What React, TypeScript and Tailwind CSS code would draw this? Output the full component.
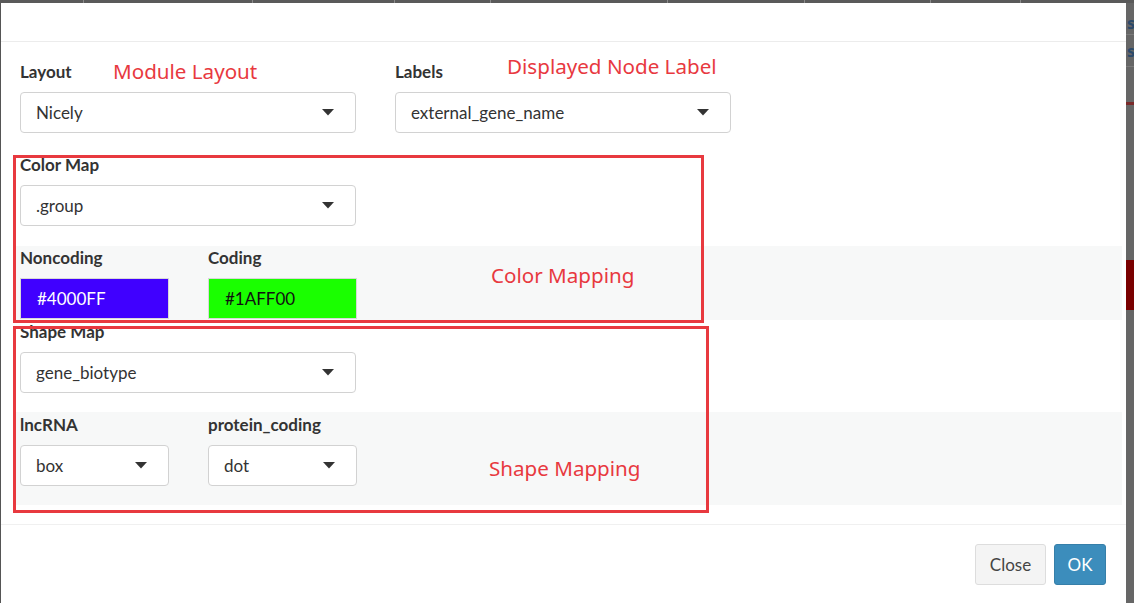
import React from "react";

const ui = { fontFamily: "Lato, 'Open Sans', sans-serif" };
const note = { fontFamily: "'Noto Sans', 'Open Sans', sans-serif" };

function Caret() {
  return (
    <svg width="12" height="7" viewBox="0 0 12 7" className="block">
      <path d="M0 0H12L6 6.5Z" fill="#333" />
    </svg>
  );
}

function Label({ children }: { children: React.ReactNode }) {
  return <div className="h-[20px] text-[17px] leading-[20px] font-bold text-[#333] mb-[10px]">{children}</div>;
}

function Select({ value, small }: { value: string; small?: boolean }) {
  return (
    <div
      className={
        (small ? "w-[149px] " : "w-[336px] ") +
        "h-[41px] flex items-center justify-between rounded-[4px] border border-[#d2d2d2] bg-white pl-[15px] pr-[21px] text-[17px] text-[#333]"
      }
    >
      <span>{value}</span>
      <Caret />
    </div>
  );
}

export default function App() {
  return (
    <div className="relative w-[1134px] h-[603px] overflow-hidden bg-[#666666]" style={ui}>
      {/* top strip of background page */}
      <div className="h-[3px] bg-[#5a5a5a] flex">
        <div className="w-[83px]" /><div className="w-px bg-[#8a8a8a]" />
        <div className="w-[168px]" /><div className="w-px bg-[#8a8a8a]" />
        <div className="w-[141px]" /><div className="w-px bg-[#8a8a8a]" />
        <div className="w-[95px]" /><div className="w-px bg-[#8a8a8a]" />
        <div className="w-[176px]" /><div className="w-px bg-[#8a8a8a]" />
        <div className="w-[136px]" /><div className="w-px bg-[#8a8a8a]" />
        <div className="w-[125px]" /><div className="w-px bg-[#8a8a8a]" />
        <div className="w-[89px]" /><div className="w-px bg-[#8a8a8a]" />
      </div>
      <div className="flex">
        <div className="w-[1px] bg-[#555]" />
        {/* modal */}
        <div className="w-[1125px] h-[600px] bg-white flex flex-col">
          <div className="h-[39px] border-b border-[#ececec] shrink-0" />
          {/* body */}
          <div className="flex flex-col">
            <div className="px-[19px] pt-[20px] grid grid-cols-[336px_336px] gap-x-[39px]">
              <div>
                <Label>Layout</Label>
                <Select value="Nicely" />
              </div>
              <div>
                <Label>Labels</Label>
                <Select value="external_gene_name" />
              </div>
            </div>
            <div className="px-[19px] pt-[22px]">
              <Label>Color Map</Label>
              <Select value=".group" />
            </div>
            <div className="mt-[20px] ml-[14px] mr-[4px] bg-[#f7f8f8] pl-[5px] pt-[2px] pb-[1px] flex gap-[39px]">
              <div>
                <Label>Noncoding</Label>
                <div className="w-[149px] h-[41px] flex items-center pl-[16px] bg-[#4000FF] text-white text-[17px] border border-[#d8d8d8]">#4000FF</div>
              </div>
              <div>
                <Label>Coding</Label>
                <div className="w-[149px] h-[41px] flex items-center pl-[16px] bg-[#1AFF00] text-[#111] text-[17px] border border-[#d8d8d8]">#1AFF00</div>
              </div>
            </div>
            <div className="px-[19px] pt-[2px]">
              <Label>Shape Map</Label>
              <Select value="gene_biotype" />
            </div>
            <div className="mt-[19px] ml-[14px] mr-[4px] bg-[#f7f8f8] pl-[5px] pt-[3px] pb-[19px] flex gap-[39px]">
              <div>
                <Label>lncRNA</Label>
                <Select value="box" small />
              </div>
              <div>
                <Label>protein_coding</Label>
                <Select value="dot" small />
              </div>
            </div>
            <div className="h-[19px]" />
          </div>
          {/* footer */}
          <div className="border-t border-[#f0f0f0] pt-[19px] pr-[20px] flex justify-end gap-[8px]">
            <button className="h-[41px] w-[71px] rounded-[3px] border border-[#dddddd] bg-[#f4f4f4] text-[17px] text-[#444]">Close</button>
            <button className="h-[41px] w-[52px] rounded-[3px] border border-[#367fa9] bg-[#3c8dbc] text-[17px] text-white">OK</button>
          </div>
        </div>
        {/* background page right strip */}
        <div className="flex-1 relative">
          <div className="absolute left-[1px] top-[8px] text-[16px] font-bold text-[#2c4a6b]" style={note}>s</div>
          <div className="absolute left-0 right-0 top-[31px] h-px bg-[#7a7a7a]" />
          <div className="absolute left-[1px] top-[36px] text-[16px] font-bold text-[#2c4a6b]" style={note}>s</div>
          <div className="absolute left-0 right-0 top-[63px] h-px bg-[#7a7a7a]" />
          <div className="absolute left-0 right-0 top-[99px] h-[3px] bg-[#7a2a2a]" />
          <div className="absolute left-0 right-0 top-[257px] h-[50px] bg-[#7a0000]" />
        </div>
      </div>

      {/* annotations */}
      <div className="absolute left-[113px] top-[59px] text-[20.6px] leading-[24px] text-[#e8393f]" style={note}>Module Layout</div>
      <div className="absolute left-[507px] top-[54px] text-[20.6px] leading-[24px] text-[#e8393f]" style={note}>Displayed Node Label</div>
      <div className="absolute left-[491px] top-[263px] text-[20.6px] leading-[24px] text-[#e8393f]" style={note}>Color Mapping</div>
      <div className="absolute left-[489px] top-[456px] text-[20.6px] leading-[24px] text-[#e8393f]" style={note}>Shape Mapping</div>
      <div className="absolute left-[13px] top-[155px] w-[691px] h-[168px] border-[3px] border-[#e8393f]" />
      <div className="absolute left-[13px] top-[326px] w-[696px] h-[187px] border-[3px] border-[#e8393f]" />
    </div>
  );
}
